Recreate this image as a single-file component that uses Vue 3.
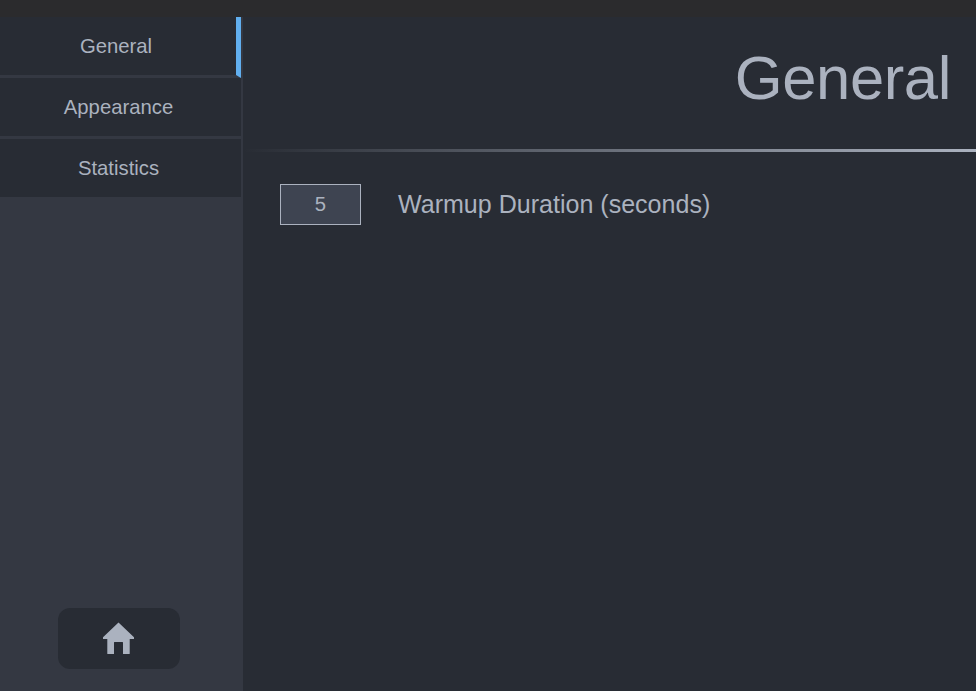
<script setup>
import { ref } from 'vue'

const tabs = ['General', 'Appearance', 'Statistics']
const active = ref('General')
const warmup = ref('5')
</script>

<template>
  <div class="window">
    <div class="titlebar"></div>
    <div class="body">
      <nav class="sidebar">
        <button
          v-for="tab in tabs"
          :key="tab"
          class="tab"
          :class="{ active: tab === active }"
          @click="active = tab"
        >{{ tab }}</button>
        <button class="home" aria-label="Home">
          <svg width="32" height="32" viewBox="0 0 32 32">
            <path d="M16.5 0.6 L32 15.2 V17 H27.7 V31.5 Q27.7 32 27.2 32 H21 V20.4 Q21 20 20.6 20 H12.4 Q12 20 12 20.4 V32 H5.8 Q5.3 32 5.3 31.5 V17 H1 V15.2 Z" />
          </svg>
        </button>
      </nav>
      <main class="content">
        <h1 class="title">{{ active }}</h1>
        <div class="rule"></div>
        <label class="setting">
          <input v-model="warmup" class="number" type="text" />
          <span class="caption">Warmup Duration (seconds)</span>
        </label>
      </main>
    </div>
  </div>
</template>

<style>
body {
  margin: 0;
  background: #282c34;
}
</style>

<style scoped>
.window {
  display: flex;
  flex-direction: column;
  height: 100vh;
  overflow: hidden;
  font-family: "Liberation Sans", Arial, sans-serif;
  color: #abb2bf;
  background: #282c34;
}
.titlebar {
  flex: 0 0 17px;
  background: #2b2b2d;
}
.body {
  display: flex;
  flex: 1;
  min-height: 0;
}
.sidebar {
  box-sizing: border-box;
  display: flex;
  flex-direction: column;
  flex: 0 0 243px;
  padding: 0 2px 22px 0;
  background: #343842;
}
.tab {
  box-sizing: border-box;
  height: 61px;
  padding: 0 4px 0 0;
  border: 0;
  border-bottom: 3px solid #343842;
  background: #282c34;
  color: inherit;
  font: 20.3px "Liberation Sans", Arial, sans-serif;
}
.tab.active {
  border-right: 5px solid #61afef;
}
.home {
  box-sizing: border-box;
  display: flex;
  align-items: center;
  justify-content: center;
  width: 122px;
  height: 61px;
  margin: auto 0 0 58px;
  padding: 0 2px 1px 0;
  border: 0;
  border-radius: 12px;
  background: #282c34;
}
.home svg {
  fill: #abb2bf;
}
.content {
  display: flex;
  flex-direction: column;
  flex: 1;
}
.title {
  height: 132px;
  margin: 0;
  padding-right: 25px;
  font-size: 61.6px;
  font-weight: 400;
  line-height: 122px;
  letter-spacing: -0.4px;
  text-align: right;
}
.rule {
  height: 3px;
  background: linear-gradient(to right, #282c34, #abb2bf);
}
.setting {
  display: flex;
  align-items: center;
  gap: 37px;
  padding: 32px 0 0 37px;
}
.number {
  box-sizing: border-box;
  width: 81px;
  height: 41px;
  padding: 0 0 1px;
  border: 1px solid #abb2bf;
  background: #3e4451;
  color: inherit;
  font: 20.3px "Liberation Sans", Arial, sans-serif;
  text-align: center;
}
.caption {
  font-size: 25.05px;
}
</style>
